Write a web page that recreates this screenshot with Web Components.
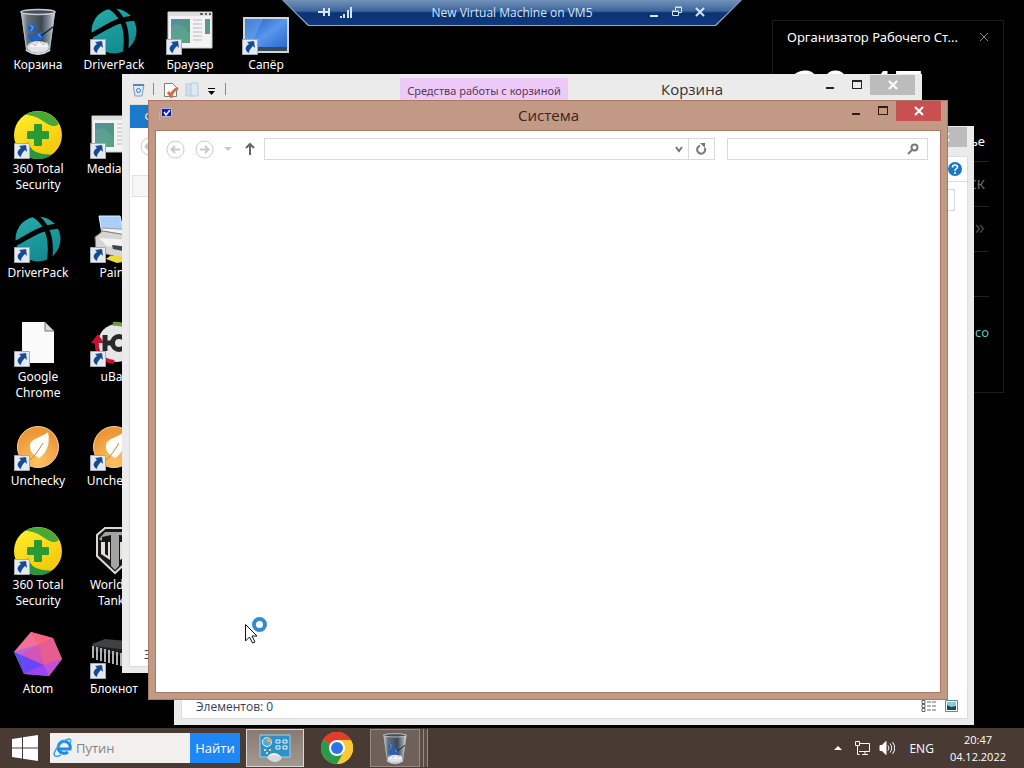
<!DOCTYPE html>
<html lang="ru">
<head>
<meta charset="utf-8">
<title>New Virtual Machine on VM5</title>
<style>
    html, body {
        margin: 0;
        height: 100%;
    }
    body {
        background: #000;
        color: #333;
        font-family: "Noto Sans", "Open Sans", sans-serif;
        font-size: 12px;
        overflow: hidden;
    }
</style>
</head>
<body>
<virtual-desktop>
    <icon-column slot="icons">
        <desktop-icon icon="bin">Корзина</desktop-icon>
        <desktop-icon icon="total" shortcut>360 Total Security</desktop-icon>
        <desktop-icon icon="driver" shortcut>DriverPack</desktop-icon>
        <desktop-icon icon="file" shortcut>Google Chrome</desktop-icon>
        <desktop-icon icon="leaf" shortcut>Unchecky</desktop-icon>
        <desktop-icon icon="total" shortcut>360 Total Security</desktop-icon>
        <desktop-icon icon="atom">Atom</desktop-icon>
    </icon-column>
    <icon-column slot="icons">
        <desktop-icon icon="driver" shortcut>DriverPack</desktop-icon>
        <desktop-icon icon="page" shortcut>MediaGet</desktop-icon>
        <desktop-icon icon="printer" shortcut>Paint</desktop-icon>
        <desktop-icon icon="ubar" shortcut>uBar</desktop-icon>
        <desktop-icon icon="leaf" shortcut>Unchecky</desktop-icon>
        <desktop-icon icon="tanks">World of Tanks</desktop-icon>
        <desktop-icon icon="chip" shortcut>Блокнот</desktop-icon>
    </icon-column>
    <icon-column slot="icons">
        <desktop-icon icon="page" shortcut>Браузер</desktop-icon>
    </icon-column>
    <icon-column slot="icons">
        <desktop-icon icon="screen" shortcut>Сапёр</desktop-icon>
    </icon-column>

    <desk-gadget></desk-gadget>

    <app-window class="back">
        <ribbon-strip></ribbon-strip>
        <explorer-nav></explorer-nav>
        <status-bar slot="status">Элементов: 0</status-bar>
    </app-window>

    <app-window class="middle">
        <quick-access slot="tools"></quick-access>
        <span slot="title">Корзина</span>
        <ribbon-tabs>Файл</ribbon-tabs>
        <explorer-nav></explorer-nav>
        <column-header></column-header>
        <status-bar slot="status">Элементов: 0</status-bar>
    </app-window>

    <app-window class="front" active>
        <shell-icon slot="icon" name="system"></shell-icon>
        <span slot="title">Система</span>
        <explorer-nav></explorer-nav>
    </app-window>

    <rdp-bar>New Virtual Machine on VM5</rdp-bar>
    <busy-cursor></busy-cursor>

    <task-bar slot="taskbar"></task-bar>
</virtual-desktop>

<script>
const icons = {
    bin: `<svg viewBox="0 0 48 48">
        <defs><linearGradient id="g" x1="0" x2="1"><stop offset="0" stop-color="#c5cdd3"/><stop offset=".18" stop-color="#68737c"/><stop offset=".6" stop-color="#3d4751"/><stop offset=".85" stop-color="#8e9aa3"/><stop offset="1" stop-color="#dfe5e9"/></linearGradient></defs>
        <path d="M7 4 L41 4 L36 44 Q24 50 12 44Z" fill="url(#g)"/>
        <path d="M7 4 L13 44 M41 4 L35 44" stroke="#b4bec5" stroke-width="1" fill="none"/>
        <path d="M14 19 l5-3 4 5-4 4-5-2z M15 26l5 2 3 6-5 1-4-4z M22 27l5-3 4 4-3 5-6 0z" fill="#1f62c4"/>
        <path d="M16 18l3 2-2 4 M24 27l3 3" stroke="#5c9be8" stroke-width="1.5" fill="none"/>
        <path d="M27 29 L39 20" stroke="#20252a" stroke-width="1.5"/>
        <ellipse cx="24" cy="40" rx="11" ry="6" fill="#dfe3e5"/>
        <path d="M14 40l4-4 3 3 4-5 4 4 4-3 2 5" fill="#f1f4f4" stroke="#a5afb5" stroke-width=".7"/>
        <path d="M12 43Q24 51 36 43" stroke="#cdd5da" stroke-width="2" fill="none"/>
        <ellipse cx="24" cy="5" rx="17" ry="2.500" fill="#454e56" stroke="#c4ccd1" stroke-width="1.3"/></svg>`,
    total: `<svg viewBox="0 0 48 48">
        <defs><linearGradient id="y" x2=".6" y2="1"><stop offset="0" stop-color="#ffef2e"/><stop offset="1" stop-color="#f3c90b"/></linearGradient></defs>
        <circle cx="24" cy="24" r="24" fill="url(#y)"/>
        <path d="M11 4A24 24 0 0 1 44 11q2 3-3 4C31 15 27 4 11 4z" fill="#47a838"/>
        <path d="M14 31Q17 44 38 43.500A24 24 0 0 1 5 39z" fill="#2b963b"/>
        <path d="M20 14q0-1 1-1h6q1 0 1 1v6h6q1 0 1 1v6q0 1-1 1h-6v6q0 1-1 1h-6q-1 0-1-1v-6h-6q-1 0-1-1v-6q0-1 1-1h6z" fill="#279a36"/></svg>`,
    driver: `<svg viewBox="0 0 48 48">
        <defs><linearGradient id="t" x2=".4" y2="1"><stop offset="0" stop-color="#28aaa9"/><stop offset="1" stop-color="#138c91"/></linearGradient></defs>
        <circle cx="24" cy="24" r="22.500" fill="url(#t)"/>
        <path d="M0 29C14 23 24 12 46 11M20 0C34 9 39 25 35 48" stroke="#000" stroke-width="5" fill="none"/></svg>`,
    file: `<svg viewBox="0 -2 48 48"><path d="M8 1h23l9 9v32H8z" fill="#fafafa"/><path d="M31 1v9h9z" fill="#dadada" stroke="#777"/></svg>`,
    leaf: `<svg viewBox="0 0 48 48">
        <defs><radialGradient id="o" cx=".5" cy=".85" r=".7"><stop offset="0" stop-color="#ffc163"/><stop offset="1" stop-color="#ec9838"/></radialGradient></defs>
        <circle cx="24" cy="24" r="20.500" fill="url(#o)" stroke="#f9d19b"/>
        <path d="M34 9C28 15 15 15 16 24c0 5 4 8 9 11 6-3 12-13 9-26z" fill="#fffdf8"/>
        <path d="M14 38C20 35 24 28 29 20" stroke="#b08a50" fill="none"/></svg>`,
    atom: `<svg viewBox="0 0 48 48">
        <path d="M17 1L39 7 48 28 35 45 10 43 0 21z" fill="#d74d9f"/>
        <path d="M17 1L39 7 24 14z" fill="#fa6679"/><path d="M17 1L24 14 0 21z" fill="#f27096"/>
        <path d="M39 7L24 14 30 34 48 28z" fill="#e55d92"/><path d="M24 14L30 34 7 24z" fill="#d455b7"/>
        <path d="M0 21L7 24 24 14z" fill="#b469de"/><path d="M0 21L10 43 7 24z" fill="#4f52ed"/>
        <path d="M7 24L30 34 10 43z" fill="#6846fa"/><path d="M10 43L30 34 35 45z" fill="#9b46f4"/>
        <path d="M30 34L48 28 35 45z" fill="#c150dc"/></svg>`,
    page: `<svg viewBox="0 0 48 48">
        <defs><linearGradient id="p" y2="1"><stop offset="0" stop-color="#578fa6"/><stop offset="1" stop-color="#4b9b68"/></linearGradient></defs>
        <path d="M2 5h44v36H2z" fill="#f2f3f2" stroke="#c9cdca"/>
        <path d="M2 5h44v4H2z" fill="#dcdfdd"/><path d="M34 7h3m2 0h2m2 0h2" stroke="#333" stroke-width="1.5"/>
        <path d="M5 12h19v24H5z" fill="url(#p)"/><path d="M5 20q9-8 19 8v8H5z" fill="#6fb2a0" opacity=".4"/>
        <path d="M27 13h9m-9 4h9m-9 4h9m-9 4h9m-9 4h9m-9 4h9" stroke="#b9bebb"/>
        <path d="M39 12h5v15h-5z" fill="#5b978d"/></svg>`,
    screen: `<svg viewBox="0 0 48 48">
        <defs><linearGradient id="s" x2="1" y2="1"><stop offset="0" stop-color="#1b54b7"/><stop offset=".5" stop-color="#5797ec"/><stop offset="1" stop-color="#235fc8"/></linearGradient></defs>
        <path d="M2 11h44v34H2z" fill="url(#s)" stroke="#cad7df" stroke-width="2"/>
        <path d="M3 40h42v4H3z" fill="#37495d"/><path d="M3 12L21 12 10 36H3z" fill="#7eb4f4" opacity=".4"/></svg>`,
    printer: `<svg viewBox="0 0 48 48">
        <path d="M9 1l21 0 4 18H12z" fill="#a9cef7" stroke="#e5f1fd"/>
        <path d="M13 13l31 2 4 11-40-3z" fill="#f2f2f0" stroke="#9b9b98"/>
        <path d="M5 22l8-6 35 6v18l-18 3-24-7z" fill="#d5d6d3" stroke="#777"/>
        <path d="M9 23l31 2v8L17 31z" fill="#f3f3f1"/><path d="M22 30l18 2-2 5-15-3z" fill="#40454b"/>
        <path d="M20 41l10 0 8 5-11 2-11-4z" fill="#e9dc36"/></svg>`,
    ubar: `<svg viewBox="-3 -2 48 48">
        <circle cx="24" cy="22" r="19" fill="#e4e6e7"/>
        <path d="M20 3A20 20 0 0 1 38 10" stroke="#6f9c3d" stroke-width="4" fill="none"/>
        <path d="M4 18Q2 36 16 40l5 1" stroke="#ca102d" stroke-width="4" fill="none"/><path d="M5 13l6 9H-2z" fill="#ca102d"/>
        <path d="M12 14v16m0-8h8" stroke="#272929" stroke-width="5" fill="none"/>
        <circle cx="26" cy="22" r="6.500" stroke="#272929" stroke-width="5" fill="none"/></svg>`,
    tanks: `<svg viewBox="-1 0 48 48">
        <path d="M14 1h20l8 7v21L24 46 6 29V8z" fill="#171717" stroke="#d9d9d7" stroke-width="2"/>
        <path d="M14 5h20l7 6-4 2V9l-9-1v31l-4 4-4-4V8l-9 2v4l-3-2z" fill="#a5a4a1"/>
        <path d="M10 15h4v12l3 2V15h2v18l-9-6zM38 15h-4v12l-3 2V15h-2v18l9-6z" fill="#e1dfdb"/></svg>`,
    chip: `<svg viewBox="0 0 48 48">
        <path d="M2 13L15 8 48 11v12L4 16z" fill="#404142"/><path d="M4 15l44 5v8L4 20z" fill="#1e1f20"/>
        <path d="M3 15v12m4-11v13m4-12v13m4-12v13m4-12v13m4-12v13m4-12v13m4-12v13" stroke="#b0b0b0" stroke-width="2"/></svg>`,
    system: `<svg viewBox="0 0 16 16">
        <path d="M2.500 2.500h10v8h-10z" fill="#0d1ea9" stroke="#abb7ed"/><path d="M5 6l2 3 4-5" stroke="#fff" stroke-width="1.5" fill="none"/>
        <path d="M0 7h1v7H0z" fill="#a9c79a"/></svg>`
};

// makes a shadow root from a string and hands it back
function shadow(el, html) {
    const root = el.attachShadow({ mode: 'open' });
    root.innerHTML = html;
    return root;
}

class ShellIcon extends HTMLElement {
    connectedCallback() {
        if (this.shadowRoot) return;
        shadow(this, `
            <style>
                :host { display: block; width: 16px; height: 16px; }
                svg { display: block; width: 100%; height: 100%; overflow: hidden; }
            </style>
            ${icons[this.getAttribute('name')] || ''}
        `);
    }
}

class VirtualDesktop extends HTMLElement {
    constructor() {
        super();
        shadow(this, `
            <style>
                :host {
                    display: flex;
                    flex-direction: column;
                    height: 100vh;
                }
                main {
                    flex: 1;
                    min-height: 0;
                    position: relative;
                    background: #000;
                }
                .icons {
                    display: flex;
                    align-items: flex-start;
                    padding-top: 7px;
                }
                /* free-floating windows */
                ::slotted(app-window) { position: absolute; }
                ::slotted(.back) { inset: 126px 50px 3px 174px; }
                ::slotted(.middle) { inset: 74px 102px 55px 122px; }
                ::slotted(.front) { inset: 100px 76px 28px 148px; }
                ::slotted(desk-gadget) { position: absolute; top: 20px; right: 20px; }
                ::slotted(rdp-bar) { position: absolute; top: 0; left: 50%; transform: translateX(-50%); }
                ::slotted(busy-cursor) { position: absolute; left: 244px; top: 616px; }
            </style>
            <main>
                <div class="icons"><slot name="icons"></slot></div>
                <slot></slot>
            </main>
            <slot name="taskbar"></slot>
        `);
    }
}

class IconColumn extends HTMLElement {
    constructor() {
        super();
        shadow(this, `
            <style>
                :host { display: grid; grid-auto-rows: 104px; width: 76px; }
            </style>
            <slot></slot>
        `);
    }
}

class DesktopIcon extends HTMLElement {
    connectedCallback() {
        if (this.shadowRoot) return;
        const arrow = `
            <svg class="arrow" viewBox="0 0 16 16">
                <path d="M.5.500h15v15H.5z" fill="#e6eaef" stroke="#a5abb2"/>
                <path d="M5 3l7-1 1 7-2-2c-2 2-4 4-4 7-4-2-5-6 0-9z" fill="#174b94"/>
            </svg>`;
        shadow(this, `
            <style>
                :host { display: block; color: #fff; }
                a {
                    display: flex;
                    flex-direction: column;
                    align-items: center;
                    gap: 2px;
                    color: inherit;
                    text-decoration: none;
                    text-align: center;
                    line-height: 16px;
                }
                .picture { position: relative; width: 48px; height: 48px; }
                shell-icon { width: 48px; height: 48px; }
                .arrow { position: absolute; left: 0; bottom: 0; width: 16px; height: 16px; }
                .label { width: 64px; display: flex; justify-content: center; }
            </style>
            <a href="#">
                <span class="picture">
                    <shell-icon name="${this.getAttribute('icon')}"></shell-icon>
                    ${this.hasAttribute('shortcut') ? arrow : ''}
                </span>
                <span class="label"><slot></slot></span>
            </a>
        `);
    }
}

class DeskGadget extends HTMLElement {
    constructor() {
        super();
        shadow(this, `
            <style>
                :host {
                    display: block;
                    box-sizing: border-box;
                    width: 232px;
                    height: 373px;
                    border: 1px solid #1c1c1c;
                    padding: 7px 14px;
                    color: #fff;
                }
                header { display: flex; justify-content: space-between; align-items: center; height: 18px; }
                h2 { margin: 0; font-weight: 400; font-size: 13px; line-height: 18px; }
                button { background: none; border: 0; padding: 0; height: 10px; }
                svg { display: block; width: 10px; height: 10px; }
                time { display: block; font: 52px/60px "Open Sans", sans-serif; padding: 12px 4px 3px; }
                p {
                    box-sizing: border-box;
                    margin: 0;
                    height: 45px;
                    line-height: 44px;
                    font-size: 13px;
                    text-align: right;
                    padding-right: 4px;
                    border-bottom: 1px solid #222;
                }
                .day { height: 41px; line-height: 40px; }
                .dim { color: #777; }
                .more { font-size: 20px; line-height: 40px; color: #444; }
                .last { border: 0; height: 70px; line-height: 70px; color: #5bc2c2; padding: 0; }
            </style>
            <header>
                <h2>Организатор Рабочего Ст...</h2>
                <button aria-label="Закрыть"><svg viewBox="0 0 10 10"><path d="M1 1l8 8m0-8L1 9" stroke="#888" fill="none"/></svg></button>
            </header>
            <time>20:47</time>
            <p class="day">Воскресенье</p>
            <p class="dim">ПОИСК</p>
            <p class="more">»</p>
            <p></p>
            <p class="last">co</p>
        `);
    }
}

class AppWindow extends HTMLElement {
    constructor() {
        super();
        shadow(this, `
            <style>
                :host {
                    display: flex;
                    flex-direction: column;
                    box-sizing: border-box;
                    padding: 0 7px 7px 8px;
                    background: #ebebeb;
                    --line: #dcdcdc;
                    --close: #bcbcbc;
                    --glyph: #222;
                }
                :host([active]) {
                    padding: 0 8px 8px;
                    background: #c29985;
                    box-shadow: inset 0 0 0 1px #aa7966;
                    --line: #aa7966;
                    --close: #c75050;
                    --glyph: #351b10;
                }
                header {
                    display: flex;
                    height: 30px;
                }
                :host([active]) header { margin-right: -1px; }
                .icon { display: flex; width: 0; padding: 6px 0 0 3px; }
                .icon ::slotted(*) { flex: none; }
                h1 {
                    flex: 1;
                    margin: 0;
                    text-align: center;
                    font-family: "Open Sans", sans-serif;
                    font-weight: 400;
                    font-size: 15px;
                    line-height: 30px;
                    color: #333;
                }
                :host([active]) h1 { margin-left: 96px; color: #3b241c; }
                .controls { display: flex; height: 21px; }
                button { border: 0; padding: 0; background: none; width: 27px; display: grid; place-items: center; }
                button.close { width: 45px; background: var(--close); margin-top: 1px; height: 20px; }
                svg { width: 12px; height: 12px; stroke: var(--glyph); fill: none; stroke-width: 2; }
                .close svg { stroke: #fff; }
                section {
                    flex: 1;
                    min-height: 0;
                    display: flex;
                    flex-direction: column;
                    background: #fff;
                    box-shadow: 0 0 0 1px var(--line);
                    margin-top: 1px;
                }
                .body { flex: 1; min-height: 0; overflow: hidden; }
            </style>
            <header>
                <div class="icon"><slot name="icon"></slot></div>
                <slot name="tools"></slot>
                <h1><slot name="title"></slot></h1>
                <div class="controls">
                    <button aria-label="Свернуть"><svg viewBox="0 0 12 12"><path d="M2 9h8"/></svg></button>
                    <button aria-label="Развернуть"><svg viewBox="0 0 12 12"><path d="M1 2h10M1.500 2v8M10.500 2v8M1 9.500h10" stroke-width="1"/><path d="M1 2h10"/></svg></button>
                    <button class="close" aria-label="Закрыть"><svg viewBox="0 0 12 12"><path d="M2 2l8 8M10 2l-8 8"/></svg></button>
                </div>
            </header>
            <section>
                <div class="body"><slot></slot></div>
                <slot name="status"></slot>
            </section>
        `);
    }
}

class QuickAccess extends HTMLElement {
    constructor() {
        super();
        shadow(this, `
            <style>
                :host { display: flex; flex: 0 0 435px; justify-content: space-between; }
                .tools { display: flex; align-items: center; height: 31px; }
                svg { width: 98px; height: 16px; }
                .context {
                    box-sizing: border-box;
                    width: 168px;
                    margin-top: 4px;
                    height: 26px;
                    line-height: 26px;
                    text-align: center;
                    background: #ecc9f7;
                    color: #553a60;
                    font-size: 11px;
                    white-space: nowrap;
                }
            </style>
            <div class="tools">
                <svg viewBox="0 0 98 16" fill="none">
                    <path d="M0 3h11l-2 11H2z" fill="#dce9f3" stroke="#849cb0"/><path d="M0 3h11" stroke="#5a87b1" stroke-width="2"/>
                    <circle cx="5.500" cy="8.500" r="2" stroke="#2e7bc4"/>
                    <path d="M20.500 1v12M92.500 1v12" stroke="#888"/>
                    <path d="M31.500 1.500h8l4 4v9h-12z" fill="#fff" stroke="#7b7b7b"/><path d="M35 10l3 4q1-5 7-8" stroke="#dc6941" stroke-width="3"/>
                    <path d="M53 2h7v12h-7z" fill="#d1dfeb" stroke="#b6c9d9"/><path d="M58 1h7v13h-7z" fill="#dee9f2" stroke="#b6c9d9"/>
                    <path d="M75 6.500h7" stroke="#000"/><path d="M75 9h7l-3.500 4z" fill="#000"/>
                </svg>
            </div>
            <div class="context">Средства работы с корзиной</div>
        `);
    }
}

class RibbonStrip extends HTMLElement {
    constructor() {
        super();
        shadow(this, `
            <style>
                :host {
                    display: flex;
                    justify-content: flex-end;
                    align-items: center;
                    height: 24px;
                    padding-right: 5px;
                    border-bottom: 1px solid #dadbdc;
                }
                button { border: 0; padding: 0; background: none; }
                svg { display: block; width: 14px; height: 14px; }
            </style>
            <button aria-label="Справка"><svg viewBox="0 0 14 14"><circle cx="7" cy="7" r="7" fill="#1978c5"/>
                <path d="M4.500 5.500C4.500 2 9.500 2.500 9.500 5 9.500 7 7 6.500 7 9M7 10v2" stroke="#fff" stroke-width="1.500" fill="none"/></svg></button>
        `);
    }
}

class RibbonTabs extends HTMLElement {
    constructor() {
        super();
        shadow(this, `
            <style>
                :host { display: flex; height: 23px; }
                button { border: 0; background: #1979ca; color: #fff; font: inherit; width: 60px; padding: 0; }
            </style>
            <button><slot></slot></button>
        `);
    }
}

class ColumnHeader extends HTMLElement {
    constructor() {
        super();
        shadow(this, `
            <style>
                :host { display: block; height: 20px; margin: 11px 2px; border: 1px solid #e2e2e2; background: #f6f6f6; }
            </style>
        `);
    }
}

class ExplorerNav extends HTMLElement {
    constructor() {
        super();
        shadow(this, `
            <style>
                :host {
                    display: flex;
                    align-items: center;
                    gap: 12px;
                    height: 36px;
                    padding: 0 12px 0 10px;
                }
                button { border: 0; padding: 0; background: none; display: grid; place-items: center; }
                svg { display: block; fill: none; }
                .buttons { display: flex; align-items: center; gap: 10px; margin-right: -6px; }
                .field {
                    display: flex;
                    box-sizing: border-box;
                    height: 22px;
                    border: 1px solid #d9d9d9;
                    min-width: 0;
                }
                .address { flex: 9 1 0; }
                .search { flex: 4 1 0; }
                input { flex: 1; min-width: 0; border: 0; outline: 0; padding: 0 4px; background: none; font: inherit; }
                .field button { width: 26px; }
                .refresh { border-left: 1px solid #d9d9d9; }
                .field button:first-of-type { width: 18px; }
                .search button:first-of-type { width: 28px; }
            </style>
            <div class="buttons">
                <button aria-label="Назад"><svg width="19" height="19" viewBox="0 0 19 19" stroke="#c9c9c9"><circle cx="9.500" cy="9.500" r="8.500"/><path d="M14 9.500H6M9 6L5.500 9.500 9 13" stroke-width="2"/></svg></button>
                <button aria-label="Вперёд"><svg width="19" height="19" viewBox="0 0 19 19" stroke="#c9c9c9"><circle cx="9.500" cy="9.500" r="8.500"/><path d="M5 9.500h8M10 6l3.500 3.500L10 13" stroke-width="2"/></svg></button>
                <button aria-label="Последние"><svg width="8" height="5" viewBox="0 0 8 5"><path d="M0 0h8L4 4z" fill="#c9c9c9"/></svg></button>
                <button aria-label="Вверх"><svg width="16" height="16" viewBox="0 0 16 16" stroke="#666" stroke-width="2"><path d="M8 14V3M4 7l4-4 4 4"/></svg></button>
            </div>
            <div class="field address">
                <input aria-label="Адрес">
                <button aria-label="Журнал"><svg width="10" height="10" viewBox="0 0 10 10" stroke="#777" stroke-width="2"><path d="M2 3l3 4 3-4"/></svg></button>
                <button class="refresh" aria-label="Обновить"><svg width="12" height="12" viewBox="0 0 12 12" stroke="#777"><path d="M5 2.800A4 4 0 1 0 9.800 5" stroke-width="2"/><path d="M5 0h5v5z" fill="#777" stroke="none"/></svg></button>
            </div>
            <div class="field search">
                <input aria-label="Поиск">
                <button aria-label="Найти"><svg width="12" height="12" viewBox="0 0 12 12" stroke="#777" stroke-width="2"><circle cx="7.500" cy="4.500" r="3"/><path d="M5 7L1 11"/></svg></button>
            </div>
        `);
    }
}

class StatusBar extends HTMLElement {
    constructor() {
        super();
        shadow(this, `
            <style>
                :host {
                    display: flex;
                    align-items: center;
                    justify-content: space-between;
                    height: 24px;
                    padding: 0 9px 0 14px;
                    color: #32405a;
                    font-family: "Open Sans", sans-serif;
                }
                .views { display: flex; gap: 8px; }
                button { border: 0; padding: 0; background: none; }
                svg { display: block; height: 12px; }
            </style>
            <span><slot></slot></span>
            <div class="views">
                <button aria-label="Таблица"><svg width="16" viewBox="0 0 16 12" fill="none" stroke="#666"><path d="M1 .500h3v3H1zM1 4.500h3v3H1zM1 8.500h3v3H1zM6 2h4m1 0h4M6 6h4m1 0h4M6 10h4m1 0h4"/></svg></button>
                <button aria-label="Значки"><svg width="13" viewBox="0 0 13 12"><path d="M.5.500h12v11H.5z" fill="#fff" stroke="#5e8b9a"/><path d="M2 2h9v8H2z" fill="#8cc9dd"/><path d="M2 5l4 2 5-1v4H2z" fill="#134e5b"/></svg></button>
            </div>
        `);
    }
}

class RdpBar extends HTMLElement {
    constructor() {
        super();
        shadow(this, `
            <style>
                :host {
                    display: block;
                    width: 460px;
                    background: #8ea9c8;
                    clip-path: polygon(0 0, 100% 0, 434px 100%, 26px 100%);
                    color: #d2e5fa;
                    font-family: "Open Sans", sans-serif;
                }
                .bar {
                    box-sizing: border-box;
                    display: flex;
                    align-items: center;
                    height: 26px;
                    padding: 0 36px 2px;
                    clip-path: polygon(1px 0, 459px 0, 433px 25px, 27px 25px);
                    background: linear-gradient(#7391b8, #3e669c 42%, #0b3272 50%, #103b7e);
                }
                span { flex: 1; text-align: center; }
                .group { display: flex; gap: 10px; width: 58px; }
                .right { gap: 11px; }
                button { border: 0; padding: 0; background: none; }
                svg { display: block; width: 12px; height: 12px; fill: none; stroke: #d2e5fa; stroke-width: 2; }
            </style>
            <div class="bar">
                <div class="group">
                    <button aria-label="Закрепить"><svg viewBox="0 0 12 12"><path d="M0 6h5M6 2v8M6 6h5M11 2v8"/></svg></button>
                    <svg viewBox="0 0 12 12"><path d="M1 10v2M4 8v4M8 4v8M11 1v11"/></svg>
                </div>
                <span><slot></slot></span>
                <div class="group right">
                    <button aria-label="Свернуть"><svg viewBox="0 0 12 12"><path d="M2 10h8"/></svg></button>
                    <button aria-label="Восстановить"><svg viewBox="0 0 12 12" stroke-width="1"><path d="M1.500 5.500h6v4h-6zM4.500 4V1.500h6v5H8" stroke-width="1"/><path d="M1 5h7M4 1h7" stroke-width="1"/></svg></button>
                    <button aria-label="Закрыть"><svg viewBox="0 0 12 12"><path d="M2 2l8 8M10 2l-8 8"/></svg></button>
                </div>
            </div>
        `);
    }
}

class BusyCursor extends HTMLElement {
    constructor() {
        super();
        shadow(this, `
            <style>
                :host { display: block; width: 24px; height: 28px; pointer-events: none; }
                svg { display: block; }
            </style>
            <svg width="24" height="28" viewBox="0 0 24 28">
                <circle cx="15.500" cy="8.500" r="5.500" fill="#fff" stroke="#318bd2" stroke-width="4"/>
                <path d="M1.500 8.500V25l4-4 3 6 2.500-1-3-6h5z" fill="#fff" stroke="#111"/>
            </svg>
        `);
    }
}

class TaskButton extends HTMLElement {
    constructor() {
        super();
        shadow(this, `
            <style>
                :host { display: block; width: 58px; height: 38px; }
                button {
                    width: 100%;
                    height: 100%;
                    padding: 0;
                    border: 1px solid transparent;
                    background: none;
                    display: grid;
                    place-items: center;
                }
                :host([active]) button { background: linear-gradient(#887a72, #a39992); border-color: #ddd8d4; }
                :host([running]) button { background: #6f6159; border-color: #978b85; }
                :host([running]) { width: 50px; box-shadow: 3px 0 #5c4e47, 4px 0 #978b85, 7px 0 #5c4e47, 8px 0 #978b85; }
            </style>
            <button><slot></slot></button>
        `);
    }
}

class TaskBar extends HTMLElement {
    constructor() {
        super();
        shadow(this, `
            <style>
                :host {
                    display: flex;
                    align-items: center;
                    justify-content: space-between;
                    flex: 0 0 40px;
                    background: #4a3a34;
                    color: #fff;
                    font-family: "Open Sans", sans-serif;
                }
                svg { display: block; }
                .left, .tray, form { display: flex; align-items: center; }
                .start { border: 0; padding: 0; width: 50px; background: none; display: grid; place-items: center; }
                form { width: 190px; height: 30px; background: #f2f0ef; margin-right: 6px; }
                form svg { margin-left: 3px; flex: none; }
                input { flex: 1; min-width: 0; border: 0; outline: 0; padding: 0 4px; background: none; font: inherit; font-size: 13px; color: #858585; }
                .find { align-self: stretch; width: 50px; border: 0; padding: 0; background: #1f86f6; color: #fff; font: inherit; font-size: 13px; }
                .tray { padding-right: 18px; font-size: 11px; gap: 8px; }
                .tray button { border: 0; padding: 0; background: none; color: inherit; font: inherit; }
                .tray .hidden { margin-right: 4px; }
                .tray .lang { margin: 0 8px 0 6px; font-size: 12px; }
                .tray .clock { text-align: center; line-height: 17px; }
            </style>
            <div class="left">
                <button class="start" aria-label="Пуск"><svg width="26" height="26" viewBox="0 0 26 26" fill="#fff"><path d="M0 4l10-1.500v10H0zM11 2.300L26 0v12.500H11zM0 13.500h10v10L0 22zM11 13.500h15V26l-15-2.300z"/></svg></button>
                <form onsubmit="return false">
                    <svg width="19" height="20" viewBox="0 0 19 20" fill="none"><path d="M4 11h13A6 6 0 1 0 15 14" stroke="#1e8be6" stroke-width="3"/><path d="M2 18C-2 15 9 2 16 1c3 0 1 4 1 4M2 18c2 1 4 0 6-1" stroke="#35a4f2" stroke-width="1.500"/></svg>
                    <input aria-label="Поиск" value="Путин">
                    <button class="find">Найти</button>
                </form>
                <task-button active>
                    <svg width="32" height="28" viewBox="0 0 32 28">
                        <path d="M1 1h30v22H1z" fill="#2f91c9" stroke="#9bd2ef"/>
                        <circle cx="8" cy="8" r="4.500" fill="#55a9d5" stroke="#e4f6fe"/><path d="M8 8V3a5 5 0 0 1 5 5z" fill="#f5a832"/>
                        <path d="M17 6h4v3h-4zM24 6h4v3h-4zM17 12h4v3h-4zM24 12h4v3h-4z" fill="none" stroke="#e4f6fe"/>
                        <path d="M5 16h2m3 0h2M7 19h2" stroke="#f5d17d" stroke-width="2"/>
                        <path d="M8 24q2-5 7-5t8 5q-3 4-7 4t-8-4z" fill="#d7dbdc"/><path d="M10 22q5-4 10 0" stroke="#fff" fill="none"/></svg>
                </task-button>
                <task-button style="width:66px">
                    <svg width="32" height="32" viewBox="0 0 32 32">
                        <circle cx="16" cy="16" r="16" fill="#fcc934"/>
                        <path d="M16 16L2.100 8A16 16 0 0 1 29.900 8H16z" fill="#e33b2e"/>
                        <path d="M2.100 8A16 16 0 0 0 16 32l7-12-7-4z" fill="#269b4c"/>
                        <path d="M29.900 8A16 16 0 0 1 16 32l7-12a8 8 0 0 0-2-12z" fill="#fcc934"/>
                        <circle cx="16" cy="16" r="8" fill="#fff"/><circle cx="16" cy="16" r="6" fill="#2c73e8"/></svg>
                </task-button>
                <task-button running><shell-icon name="bin" style="width:32px;height:32px"></shell-icon></task-button>
            </div>
            <div class="tray">
                <button class="hidden" aria-label="Скрытые значки"><svg width="8" height="5" viewBox="0 0 8 5"><path d="M0 4h8L4 0z" fill="#fff"/></svg></button>
                <svg width="17" height="16" viewBox="0 0 17 16" fill="none" stroke="#fff"><path d="M6 3.500h9.500v8H5M8 14.500h6M11 12v2M1.500 1.500h4v4h-4zM3.500 6v8.500h2" stroke-width="1"/></svg>
                <svg width="16" height="16" viewBox="0 0 16 16" fill="none" stroke="#fff"><path d="M1 5.500h2l4-4v13l-4-4H1z" fill="#fff"/><path d="M9 5.500q2 2.500 0 5M11 3.500q3.500 4.500 0 9M13.500 2q4.500 6 0 12"/></svg>
                <button class="lang">ENG</button>
                <button class="clock">20:47<br>04.12.2022</button>
            </div>
        `);
    }
}

customElements.define('shell-icon', ShellIcon);
customElements.define('virtual-desktop', VirtualDesktop);
customElements.define('icon-column', IconColumn);
customElements.define('desktop-icon', DesktopIcon);
customElements.define('desk-gadget', DeskGadget);
customElements.define('app-window', AppWindow);
customElements.define('quick-access', QuickAccess);
customElements.define('ribbon-strip', RibbonStrip);
customElements.define('ribbon-tabs', RibbonTabs);
customElements.define('column-header', ColumnHeader);
customElements.define('explorer-nav', ExplorerNav);
customElements.define('status-bar', StatusBar);
customElements.define('rdp-bar', RdpBar);
customElements.define('busy-cursor', BusyCursor);
customElements.define('task-button', TaskButton);
customElements.define('task-bar', TaskBar);
</script>
</body>
</html>
